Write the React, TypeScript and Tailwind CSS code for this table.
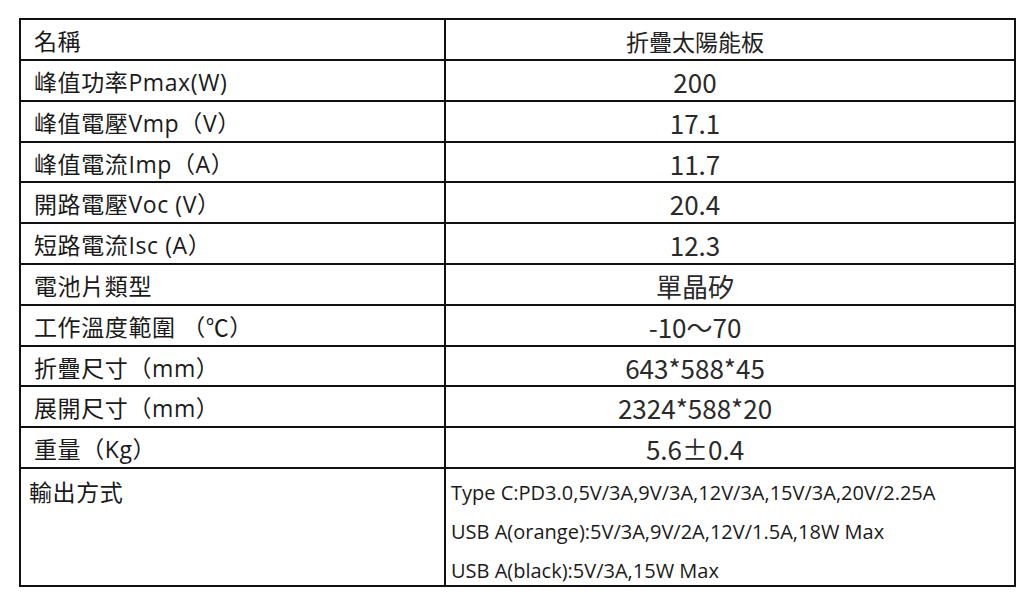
import React from 'react';

const rows: { name: string; value: string }[] = [
  { name: '峰值功率Pmax(W)', value: '200' },
  { name: '峰值電壓Vmp（V）', value: '17.1' },
  { name: '峰值電流Imp（A）', value: '11.7' },
  { name: '開路電壓Voc (V）', value: '20.4' },
  { name: '短路電流Isc (A）', value: '12.3' },
  { name: '電池片類型', value: '單晶矽' },
  { name: '工作溫度範圍 （℃）', value: '-10～70' },
  { name: '折疊尺寸（mm）', value: '643*588*45' },
  { name: '展開尺寸（mm）', value: '2324*588*20' },
  { name: '重量（Kg）', value: '5.6±0.4' },
];

const outputs = [
  'Type C:PD3.0,5V/3A,9V/3A,12V/3A,15V/3A,20V/2.25A',
  'USB A(orange):5V/3A,9V/2A,12V/1.5A,18W Max',
  'USB A(black):5V/3A,15W Max',
];

const labelFont = { fontFamily: '"Open Sans", "Noto Sans CJK TC", sans-serif' };
const valueFont = { fontFamily: '"Noto Sans CJK TC", "Noto Sans", sans-serif' };

const App: React.FC = () => {
  return (
    <div className="w-[1029px] h-[600px] bg-white overflow-hidden">
      <div className="ml-[19px] mt-[18px] w-[997px] border-2 border-[#111]">
        {/* header */}
        <div className="grid grid-cols-[425px_1fr] h-[39px]">
          <div
            className="border-r-2 border-[#111] pl-[13px] pt-[4px] text-[23px] leading-[34px] tracking-[0.6px] text-[#1a1a1a]"
            style={labelFont}
          >
            名稱
          </div>
          <div
            className="text-center pr-[70px] pt-[4px] text-[23px] leading-[34px] text-[#222]"
            style={valueFont}
          >
            折疊太陽能板
          </div>
        </div>

        {rows.map((row) => (
          <div key={row.name} className="grid grid-cols-[425px_1fr] h-[40.8px] border-t-2 border-[#111]">
            <div
              className="border-r-2 border-[#111] pl-[13px] pt-[4px] text-[23px] leading-[34px] tracking-[0.6px] text-[#1a1a1a] whitespace-nowrap"
              style={labelFont}
            >
              {row.name}
            </div>
            <div
              className="text-center pr-[70px] pt-[3px] text-[26px] leading-[36px] text-[#2a2a2a] whitespace-nowrap"
              style={valueFont}
            >
              {row.value}
            </div>
          </div>
        ))}

        {/* output row */}
        <div className="grid grid-cols-[425px_1fr] h-[118px] border-t-2 border-[#111]">
          <div
            className="border-r-2 border-[#111] pl-[8px] pt-[6px] text-[23px] leading-[34px] tracking-[0.6px] text-[#1a1a1a]"
            style={labelFont}
          >
            輸出方式
          </div>
          <div className="pl-[5px] pt-[12px] flex flex-col gap-[15px]" style={labelFont}>
            {outputs.map((line) => (
              <div key={line} className="text-[20px] leading-[24px] text-[#1a1a1a] whitespace-nowrap">
                {line}
              </div>
            ))}
          </div>
        </div>
      </div>
    </div>
  );
};

export default App;
